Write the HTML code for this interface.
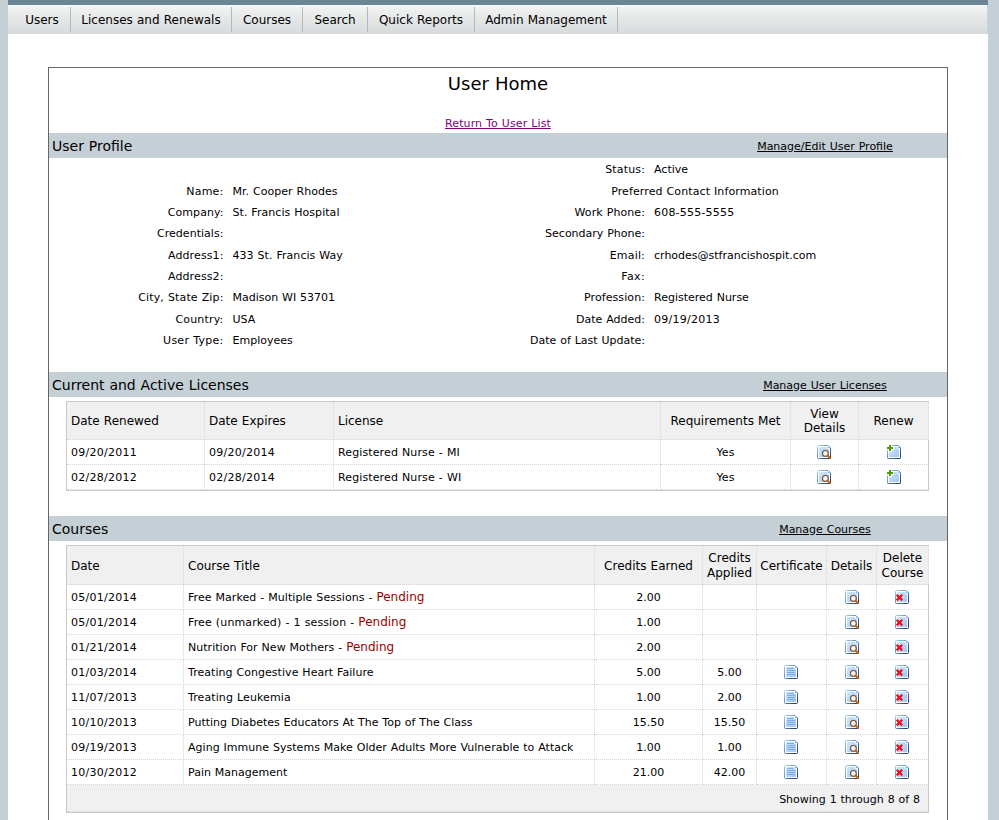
<!DOCTYPE html>
<html lang="en">
<head>
<meta charset="utf-8">
<title>User Home</title>
<style>
html,body{margin:0;padding:0;}
body{background:#c5cfd6;font-family:"DejaVu Sans","Liberation Sans",sans-serif;font-size:11px;color:#000;word-spacing:0.034em;width:999px;height:820px;overflow:hidden;position:relative;}
#page{position:absolute;left:8px;top:0;width:980px;height:820px;background:#fff;}
#topbar{height:5px;background:#6b8595;}
#nav{height:29px;margin:0;padding:0 0 0 6px;list-style:none;background:linear-gradient(#fcfcfc 0,#f2f3f3 1.5px,#e6e8e8 13px,#dcdfe0 23px,#d6d9da 29px);width:973px;overflow:hidden;border-right:1px solid #c9d2d8;}
#nav li{float:left;height:25px;margin-top:2px;line-height:27px;font-size:12px;text-align:center;border-right:1px solid #b4b8ba;box-sizing:border-box;white-space:nowrap;}
#box{position:absolute;left:40px;top:67px;width:898px;height:800px;border:1px solid #666;}
h1{position:absolute;left:0;top:5px;width:898px;margin:0;text-align:center;font-size:18px;font-weight:normal;line-height:22px;}
#ret{position:absolute;left:0;top:49px;width:898px;text-align:center;line-height:14px;}
#ret a{color:#800080;letter-spacing:.1px;}
a{color:#000;text-decoration:underline;}
.bar{position:absolute;left:0;width:898px;height:25px;background:#c5cfd6;}
.bar h2{position:absolute;left:3px;top:1px;margin:0;font-size:14px;font-weight:normal;line-height:25px;}
.bar .lnk{position:absolute;left:654px;width:244px;top:1px;text-align:center;line-height:25px;}

table.prof{position:absolute;top:91.33px;border-collapse:separate;border-spacing:0;table-layout:fixed;}
table.prof th,table.prof td{height:21.3333px;line-height:21.3333px;padding:0;font-size:11px;font-weight:normal;white-space:nowrap;vertical-align:top;}
table.prof th{text-align:right;}
table.prof td{text-align:left;}
#profL{left:0;width:440px;}
#profL th{width:174.5px;}
#profL td{padding-left:9px;}
#profR{left:394px;width:504px;}
#profR th{width:202px;}
#profR td{padding-left:9px;}
#profR td.pc{text-align:center;padding-left:0;}

table.grid{position:absolute;left:17px;width:863px;border-collapse:separate;border-spacing:0;table-layout:fixed;border:1px solid #c9c9c9;border-right:0;}
table.grid th,table.grid td{box-sizing:border-box;border-right:1px dotted #d6d6d6;border-bottom:1px dotted #d6d6d6;padding:0 4px;font-weight:normal;overflow:hidden;white-space:nowrap;}
table.grid th{background:#f0f0f0;font-size:12px;line-height:14.58px;text-align:center;vertical-align:middle;padding:0 2px;}
table.grid th.l{text-align:left;padding-left:4px;}
table.grid td{height:25px;font-size:11px;line-height:14px;text-align:left;vertical-align:middle;padding-top:2px;}
table.grid td.c{text-align:center;}
table.grid .last{border-right:1px solid #c9c9c9;}
table.grid td.foot{background:#f0f0f0;text-align:right;padding-right:8px;height:27px;padding-top:4px;}
#lic{top:333px;}
#lic th{height:38px;line-height:14px;}
#crs{top:477px;}
#crs th{height:39px;line-height:15px;padding-top:2px;}
.pend{color:#990000;font-size:12px;line-height:10px;letter-spacing:0;}
svg.ic{display:block;margin:0 auto;}
table.grid a{display:block;}
table.grid td.c a{margin-top:-2px;}
svg.ic{position:relative;}
#lic svg.iv,#crs svg.id,svg.ic2{left:-.5px;}
#lic svg.ir,#crs svg.iv{left:.5px;}
table.grid td.d{letter-spacing:.25px;}
table.grid th.last{border-right:1px dotted #d6d6d6;}
</style>
</head>
<body>
<svg width="0" height="0" style="position:absolute" aria-hidden="true"><defs><linearGradient id="go" x1="0" y1="0" x2="1" y2="1"><stop offset="0" stop-color="#a6d0f0"/><stop offset=".45" stop-color="#5f8fc4"/><stop offset="1" stop-color="#1d2f55"/></linearGradient><linearGradient id="gf" x1="0" y1="0" x2="1" y2="1"><stop offset="0" stop-color="#d3e6fb"/><stop offset="1" stop-color="#9cc7f6"/></linearGradient></defs></svg>
<div id="page">
<div id="topbar"></div>
<ul id="nav">
<li style="width:57px">Users</li>
<li style="width:161px">Licenses and Renewals</li>
<li style="width:71px">Courses</li>
<li style="width:65px">Search</li>
<li style="width:107px">Quick Reports</li>
<li style="width:143px">Admin Management</li>
</ul>
<div id="box">
<h1>User Home</h1>
<div id="ret"><a href="#">Return To User List</a></div>

<div class="bar" style="top:65px"><h2>User Profile</h2><div class="lnk"><a href="#">Manage/Edit User Profile</a></div></div>
<!--PROFILE-->
<table class="prof" id="profL">
<tr><th>&nbsp;</th><td>&nbsp;</td></tr>
<tr><th style="letter-spacing:.2px">Name:</th><td style="letter-spacing:.03px">Mr. Cooper Rhodes</td></tr>
<tr><th style="letter-spacing:.06px">Company:</th><td style="letter-spacing:.05px">St. Francis Hospital</td></tr>
<tr><th style="letter-spacing:.04px">Credentials:</th><td>&nbsp;</td></tr>
<tr><th style="letter-spacing:.11px">Address1:</th><td style="letter-spacing:.05px">433 St. Francis Way</td></tr>
<tr><th style="letter-spacing:.11px">Address2:</th><td>&nbsp;</td></tr>
<tr><th style="letter-spacing:.125px">City, State Zip:</th><td>Madison WI 53701</td></tr>
<tr><th style="letter-spacing:.19px">Country:</th><td>USA</td></tr>
<tr><th style="letter-spacing:.25px">User Type:</th><td>Employees</td></tr>
</table>
<table class="prof" id="profR">
<tr><th style="letter-spacing:.14px">Status:</th><td>Active</td></tr>
<tr><td colspan="2" class="pc" style="letter-spacing:.1px">Preferred Contact Information</td></tr>
<tr><th style="letter-spacing:.09px">Work Phone:</th><td style="letter-spacing:.2px">608-555-5555</td></tr>
<tr><th>Secondary Phone:</th><td>&nbsp;</td></tr>
<tr><th style="letter-spacing:.17px">Email:</th><td>crhodes@stfrancishospit.com</td></tr>
<tr><th style="letter-spacing:.37px">Fax:</th><td>&nbsp;</td></tr>
<tr><th style="letter-spacing:.09px">Profession:</th><td>Registered Nurse</td></tr>
<tr><th>Date Added:</th><td style="letter-spacing:.25px">09/19/2013</td></tr>
<tr><th>Date of Last Update:</th><td>&nbsp;</td></tr>
</table>
<!--/PROFILE-->

<div class="bar" style="top:304px"><h2>Current and Active Licenses</h2><div class="lnk"><a href="#">Manage User Licenses</a></div></div>
<!--LICENSES-->
<table class="grid" id="lic"><thead><tr><th class="l" style="width:138px">Date Renewed</th><th class="l" style="width:129px">Date Expires</th><th class="l" style="width:327px">License</th><th style="width:130px">Requirements Met</th><th style="width:68px">View<br>Details</th><th class="last" style="width:70px">Renew</th></tr></thead><tbody>
<tr><td class="d">09/20/2011</td><td class="d">09/20/2014</td><td style="letter-spacing:.12px">Registered Nurse - MI</td><td class="c">Yes</td><td class="c"><a href="#"><svg class="ic iv" width="14" height="14" viewBox="0 0 14 14"><path d="M1.5 .5H11L13.5 3V12.5Q13.5 13.5 12.5 13.5H1.5Q.5 13.5 .5 12.5V1.5Q.5 .5 1.5 .5Z" fill="#fff" stroke="url(#go)"/><path d="M2 2H10.2V3.8H12V12H2Z" fill="url(#gf)"/><path d="M11 1.2V3H12.8Z" fill="#7db1ea"/><circle cx="8.4" cy="8.4" r="2.9" fill="#f4f9ff" stroke="#7a4a22" stroke-width="1.1"/><path d="M10.6 10.6L13.3 13.3" stroke="#c2650f" stroke-width="2" stroke-linecap="round"/></svg></a></td><td class="c last"><a href="#"><svg class="ic ir" width="14" height="14" viewBox="0 0 14 14"><path d="M5 .5H11L13.5 3V12.5Q13.5 13.5 12.5 13.5H1.5Q.5 13.5 .5 12.5V5.5" fill="#fff" stroke="url(#go)"/><path d="M.5 5.5V12.5Q.5 13.5 1.5 13.5H12.5Q13.5 13.5 13.5 12.5V3L11 .5H5V5.5Z" fill="#fff"/><path d="M5 .5H11L13.5 3V12.5Q13.5 13.5 12.5 13.5H1.5Q.5 13.5 .5 12.5V5.5" fill="none" stroke="url(#go)"/><path d="M7 2H10.2V3.8H12V12H2V7H5V5H7Z" fill="url(#gf)"/><path d="M11 1.2V3H12.8Z" fill="#7db1ea"/><path d="M3 0V6M0 3H6" stroke="#4e9a06" stroke-width="2"/></svg></a></td></tr>
<tr><td class="d">02/28/2012</td><td class="d">02/28/2014</td><td style="letter-spacing:.12px">Registered Nurse - WI</td><td class="c">Yes</td><td class="c"><a href="#"><svg class="ic iv" width="14" height="14" viewBox="0 0 14 14"><path d="M1.5 .5H11L13.5 3V12.5Q13.5 13.5 12.5 13.5H1.5Q.5 13.5 .5 12.5V1.5Q.5 .5 1.5 .5Z" fill="#fff" stroke="url(#go)"/><path d="M2 2H10.2V3.8H12V12H2Z" fill="url(#gf)"/><path d="M11 1.2V3H12.8Z" fill="#7db1ea"/><circle cx="8.4" cy="8.4" r="2.9" fill="#f4f9ff" stroke="#7a4a22" stroke-width="1.1"/><path d="M10.6 10.6L13.3 13.3" stroke="#c2650f" stroke-width="2" stroke-linecap="round"/></svg></a></td><td class="c last"><a href="#"><svg class="ic ir" width="14" height="14" viewBox="0 0 14 14"><path d="M5 .5H11L13.5 3V12.5Q13.5 13.5 12.5 13.5H1.5Q.5 13.5 .5 12.5V5.5" fill="#fff" stroke="url(#go)"/><path d="M.5 5.5V12.5Q.5 13.5 1.5 13.5H12.5Q13.5 13.5 13.5 12.5V3L11 .5H5V5.5Z" fill="#fff"/><path d="M5 .5H11L13.5 3V12.5Q13.5 13.5 12.5 13.5H1.5Q.5 13.5 .5 12.5V5.5" fill="none" stroke="url(#go)"/><path d="M7 2H10.2V3.8H12V12H2V7H5V5H7Z" fill="url(#gf)"/><path d="M11 1.2V3H12.8Z" fill="#7db1ea"/><path d="M3 0V6M0 3H6" stroke="#4e9a06" stroke-width="2"/></svg></a></td></tr>
</tbody></table>
<!--/LICENSES-->

<div class="bar" style="top:448px"><h2>Courses</h2><div class="lnk"><a href="#">Manage Courses</a></div></div>
<!--COURSES-->
<table class="grid" id="crs"><thead><tr><th class="l" style="width:117px">Date</th><th class="l" style="width:411px">Course Title</th><th style="width:108px">Credits Earned</th><th style="width:54px">Credits<br>Applied</th><th style="width:70px">Certificate</th><th style="width:50px">Details</th><th class="last" style="width:52px">Delete<br>Course</th></tr></thead><tbody>
<tr><td class="d">05/01/2014</td><td style="letter-spacing:.06px">Free Marked - Multiple Sessions - <span class="pend">Pending</span></td><td class="c">2.00</td><td class="c">&nbsp;</td><td class="c">&nbsp;</td><td class="c"><a href="#"><svg class="ic iv" width="14" height="14" viewBox="0 0 14 14"><path d="M1.5 .5H11L13.5 3V12.5Q13.5 13.5 12.5 13.5H1.5Q.5 13.5 .5 12.5V1.5Q.5 .5 1.5 .5Z" fill="#fff" stroke="url(#go)"/><path d="M2 2H10.2V3.8H12V12H2Z" fill="url(#gf)"/><path d="M11 1.2V3H12.8Z" fill="#7db1ea"/><circle cx="8.4" cy="8.4" r="2.9" fill="#f4f9ff" stroke="#7a4a22" stroke-width="1.1"/><path d="M10.6 10.6L13.3 13.3" stroke="#c2650f" stroke-width="2" stroke-linecap="round"/></svg></a></td><td class="c last"><a href="#"><svg class="ic id" width="14" height="14" viewBox="0 0 14 14"><path d="M1.5 .5H11L13.5 3V12.5Q13.5 13.5 12.5 13.5H1.5Q.5 13.5 .5 12.5V1.5Q.5 .5 1.5 .5Z" fill="#fff" stroke="url(#go)"/><path d="M2 2H10.2V3.8H12V12H2Z" fill="url(#gf)"/><path d="M11 1.2V3H12.8Z" fill="#7db1ea"/><path d="M1.6 4.8L7.2 10.4M7.2 4.8L1.6 10.4" stroke="#e8101c" stroke-width="2.2"/></svg></a></td></tr>
<tr><td class="d">05/01/2014</td><td style="letter-spacing:.13px">Free (unmarked) - 1 session - <span class="pend">Pending</span></td><td class="c">1.00</td><td class="c">&nbsp;</td><td class="c">&nbsp;</td><td class="c"><a href="#"><svg class="ic iv" width="14" height="14" viewBox="0 0 14 14"><path d="M1.5 .5H11L13.5 3V12.5Q13.5 13.5 12.5 13.5H1.5Q.5 13.5 .5 12.5V1.5Q.5 .5 1.5 .5Z" fill="#fff" stroke="url(#go)"/><path d="M2 2H10.2V3.8H12V12H2Z" fill="url(#gf)"/><path d="M11 1.2V3H12.8Z" fill="#7db1ea"/><circle cx="8.4" cy="8.4" r="2.9" fill="#f4f9ff" stroke="#7a4a22" stroke-width="1.1"/><path d="M10.6 10.6L13.3 13.3" stroke="#c2650f" stroke-width="2" stroke-linecap="round"/></svg></a></td><td class="c last"><a href="#"><svg class="ic id" width="14" height="14" viewBox="0 0 14 14"><path d="M1.5 .5H11L13.5 3V12.5Q13.5 13.5 12.5 13.5H1.5Q.5 13.5 .5 12.5V1.5Q.5 .5 1.5 .5Z" fill="#fff" stroke="url(#go)"/><path d="M2 2H10.2V3.8H12V12H2Z" fill="url(#gf)"/><path d="M11 1.2V3H12.8Z" fill="#7db1ea"/><path d="M1.6 4.8L7.2 10.4M7.2 4.8L1.6 10.4" stroke="#e8101c" stroke-width="2.2"/></svg></a></td></tr>
<tr><td class="d">01/21/2014</td><td style="letter-spacing:.035px">Nutrition For New Mothers - <span class="pend">Pending</span></td><td class="c">2.00</td><td class="c">&nbsp;</td><td class="c">&nbsp;</td><td class="c"><a href="#"><svg class="ic iv" width="14" height="14" viewBox="0 0 14 14"><path d="M1.5 .5H11L13.5 3V12.5Q13.5 13.5 12.5 13.5H1.5Q.5 13.5 .5 12.5V1.5Q.5 .5 1.5 .5Z" fill="#fff" stroke="url(#go)"/><path d="M2 2H10.2V3.8H12V12H2Z" fill="url(#gf)"/><path d="M11 1.2V3H12.8Z" fill="#7db1ea"/><circle cx="8.4" cy="8.4" r="2.9" fill="#f4f9ff" stroke="#7a4a22" stroke-width="1.1"/><path d="M10.6 10.6L13.3 13.3" stroke="#c2650f" stroke-width="2" stroke-linecap="round"/></svg></a></td><td class="c last"><a href="#"><svg class="ic id" width="14" height="14" viewBox="0 0 14 14"><path d="M1.5 .5H11L13.5 3V12.5Q13.5 13.5 12.5 13.5H1.5Q.5 13.5 .5 12.5V1.5Q.5 .5 1.5 .5Z" fill="#fff" stroke="url(#go)"/><path d="M2 2H10.2V3.8H12V12H2Z" fill="url(#gf)"/><path d="M11 1.2V3H12.8Z" fill="#7db1ea"/><path d="M1.6 4.8L7.2 10.4M7.2 4.8L1.6 10.4" stroke="#e8101c" stroke-width="2.2"/></svg></a></td></tr>
<tr><td class="d">01/03/2014</td><td style="letter-spacing:.045px">Treating Congestive Heart Failure</td><td class="c">5.00</td><td class="c">5.00</td><td class="c"><a href="#"><svg class="ic ic2" width="14" height="14" viewBox="0 0 14 14"><path d="M1.5 .5H11L13.5 3V12.5Q13.5 13.5 12.5 13.5H1.5Q.5 13.5 .5 12.5V1.5Q.5 .5 1.5 .5Z" fill="#fff" stroke="url(#go)"/><path d="M2 2H10.2V3.8H12V12H2Z" fill="url(#gf)"/><path d="M11 1.2V3H12.8Z" fill="#7db1ea"/><path d="M3 3.5H9.5M3 5.5H10.8M3 7.5H10.8M3 9.5H10.8" stroke="#6d9fdc" stroke-width=".8"/></svg></a></td><td class="c"><a href="#"><svg class="ic iv" width="14" height="14" viewBox="0 0 14 14"><path d="M1.5 .5H11L13.5 3V12.5Q13.5 13.5 12.5 13.5H1.5Q.5 13.5 .5 12.5V1.5Q.5 .5 1.5 .5Z" fill="#fff" stroke="url(#go)"/><path d="M2 2H10.2V3.8H12V12H2Z" fill="url(#gf)"/><path d="M11 1.2V3H12.8Z" fill="#7db1ea"/><circle cx="8.4" cy="8.4" r="2.9" fill="#f4f9ff" stroke="#7a4a22" stroke-width="1.1"/><path d="M10.6 10.6L13.3 13.3" stroke="#c2650f" stroke-width="2" stroke-linecap="round"/></svg></a></td><td class="c last"><a href="#"><svg class="ic id" width="14" height="14" viewBox="0 0 14 14"><path d="M1.5 .5H11L13.5 3V12.5Q13.5 13.5 12.5 13.5H1.5Q.5 13.5 .5 12.5V1.5Q.5 .5 1.5 .5Z" fill="#fff" stroke="url(#go)"/><path d="M2 2H10.2V3.8H12V12H2Z" fill="url(#gf)"/><path d="M11 1.2V3H12.8Z" fill="#7db1ea"/><path d="M1.6 4.8L7.2 10.4M7.2 4.8L1.6 10.4" stroke="#e8101c" stroke-width="2.2"/></svg></a></td></tr>
<tr><td class="d">11/07/2013</td><td style="letter-spacing:.1px">Treating Leukemia</td><td class="c">1.00</td><td class="c">2.00</td><td class="c"><a href="#"><svg class="ic ic2" width="14" height="14" viewBox="0 0 14 14"><path d="M1.5 .5H11L13.5 3V12.5Q13.5 13.5 12.5 13.5H1.5Q.5 13.5 .5 12.5V1.5Q.5 .5 1.5 .5Z" fill="#fff" stroke="url(#go)"/><path d="M2 2H10.2V3.8H12V12H2Z" fill="url(#gf)"/><path d="M11 1.2V3H12.8Z" fill="#7db1ea"/><path d="M3 3.5H9.5M3 5.5H10.8M3 7.5H10.8M3 9.5H10.8" stroke="#6d9fdc" stroke-width=".8"/></svg></a></td><td class="c"><a href="#"><svg class="ic iv" width="14" height="14" viewBox="0 0 14 14"><path d="M1.5 .5H11L13.5 3V12.5Q13.5 13.5 12.5 13.5H1.5Q.5 13.5 .5 12.5V1.5Q.5 .5 1.5 .5Z" fill="#fff" stroke="url(#go)"/><path d="M2 2H10.2V3.8H12V12H2Z" fill="url(#gf)"/><path d="M11 1.2V3H12.8Z" fill="#7db1ea"/><circle cx="8.4" cy="8.4" r="2.9" fill="#f4f9ff" stroke="#7a4a22" stroke-width="1.1"/><path d="M10.6 10.6L13.3 13.3" stroke="#c2650f" stroke-width="2" stroke-linecap="round"/></svg></a></td><td class="c last"><a href="#"><svg class="ic id" width="14" height="14" viewBox="0 0 14 14"><path d="M1.5 .5H11L13.5 3V12.5Q13.5 13.5 12.5 13.5H1.5Q.5 13.5 .5 12.5V1.5Q.5 .5 1.5 .5Z" fill="#fff" stroke="url(#go)"/><path d="M2 2H10.2V3.8H12V12H2Z" fill="url(#gf)"/><path d="M11 1.2V3H12.8Z" fill="#7db1ea"/><path d="M1.6 4.8L7.2 10.4M7.2 4.8L1.6 10.4" stroke="#e8101c" stroke-width="2.2"/></svg></a></td></tr>
<tr><td class="d">10/10/2013</td><td>Putting Diabetes Educators At The Top of The Class</td><td class="c">15.50</td><td class="c">15.50</td><td class="c"><a href="#"><svg class="ic ic2" width="14" height="14" viewBox="0 0 14 14"><path d="M1.5 .5H11L13.5 3V12.5Q13.5 13.5 12.5 13.5H1.5Q.5 13.5 .5 12.5V1.5Q.5 .5 1.5 .5Z" fill="#fff" stroke="url(#go)"/><path d="M2 2H10.2V3.8H12V12H2Z" fill="url(#gf)"/><path d="M11 1.2V3H12.8Z" fill="#7db1ea"/><path d="M3 3.5H9.5M3 5.5H10.8M3 7.5H10.8M3 9.5H10.8" stroke="#6d9fdc" stroke-width=".8"/></svg></a></td><td class="c"><a href="#"><svg class="ic iv" width="14" height="14" viewBox="0 0 14 14"><path d="M1.5 .5H11L13.5 3V12.5Q13.5 13.5 12.5 13.5H1.5Q.5 13.5 .5 12.5V1.5Q.5 .5 1.5 .5Z" fill="#fff" stroke="url(#go)"/><path d="M2 2H10.2V3.8H12V12H2Z" fill="url(#gf)"/><path d="M11 1.2V3H12.8Z" fill="#7db1ea"/><circle cx="8.4" cy="8.4" r="2.9" fill="#f4f9ff" stroke="#7a4a22" stroke-width="1.1"/><path d="M10.6 10.6L13.3 13.3" stroke="#c2650f" stroke-width="2" stroke-linecap="round"/></svg></a></td><td class="c last"><a href="#"><svg class="ic id" width="14" height="14" viewBox="0 0 14 14"><path d="M1.5 .5H11L13.5 3V12.5Q13.5 13.5 12.5 13.5H1.5Q.5 13.5 .5 12.5V1.5Q.5 .5 1.5 .5Z" fill="#fff" stroke="url(#go)"/><path d="M2 2H10.2V3.8H12V12H2Z" fill="url(#gf)"/><path d="M11 1.2V3H12.8Z" fill="#7db1ea"/><path d="M1.6 4.8L7.2 10.4M7.2 4.8L1.6 10.4" stroke="#e8101c" stroke-width="2.2"/></svg></a></td></tr>
<tr><td class="d">09/19/2013</td><td style="letter-spacing:.025px">Aging Immune Systems Make Older Adults More Vulnerable to Attack</td><td class="c">1.00</td><td class="c">1.00</td><td class="c"><a href="#"><svg class="ic ic2" width="14" height="14" viewBox="0 0 14 14"><path d="M1.5 .5H11L13.5 3V12.5Q13.5 13.5 12.5 13.5H1.5Q.5 13.5 .5 12.5V1.5Q.5 .5 1.5 .5Z" fill="#fff" stroke="url(#go)"/><path d="M2 2H10.2V3.8H12V12H2Z" fill="url(#gf)"/><path d="M11 1.2V3H12.8Z" fill="#7db1ea"/><path d="M3 3.5H9.5M3 5.5H10.8M3 7.5H10.8M3 9.5H10.8" stroke="#6d9fdc" stroke-width=".8"/></svg></a></td><td class="c"><a href="#"><svg class="ic iv" width="14" height="14" viewBox="0 0 14 14"><path d="M1.5 .5H11L13.5 3V12.5Q13.5 13.5 12.5 13.5H1.5Q.5 13.5 .5 12.5V1.5Q.5 .5 1.5 .5Z" fill="#fff" stroke="url(#go)"/><path d="M2 2H10.2V3.8H12V12H2Z" fill="url(#gf)"/><path d="M11 1.2V3H12.8Z" fill="#7db1ea"/><circle cx="8.4" cy="8.4" r="2.9" fill="#f4f9ff" stroke="#7a4a22" stroke-width="1.1"/><path d="M10.6 10.6L13.3 13.3" stroke="#c2650f" stroke-width="2" stroke-linecap="round"/></svg></a></td><td class="c last"><a href="#"><svg class="ic id" width="14" height="14" viewBox="0 0 14 14"><path d="M1.5 .5H11L13.5 3V12.5Q13.5 13.5 12.5 13.5H1.5Q.5 13.5 .5 12.5V1.5Q.5 .5 1.5 .5Z" fill="#fff" stroke="url(#go)"/><path d="M2 2H10.2V3.8H12V12H2Z" fill="url(#gf)"/><path d="M11 1.2V3H12.8Z" fill="#7db1ea"/><path d="M1.6 4.8L7.2 10.4M7.2 4.8L1.6 10.4" stroke="#e8101c" stroke-width="2.2"/></svg></a></td></tr>
<tr><td class="d">10/30/2012</td><td>Pain Management</td><td class="c">21.00</td><td class="c">42.00</td><td class="c"><a href="#"><svg class="ic ic2" width="14" height="14" viewBox="0 0 14 14"><path d="M1.5 .5H11L13.5 3V12.5Q13.5 13.5 12.5 13.5H1.5Q.5 13.5 .5 12.5V1.5Q.5 .5 1.5 .5Z" fill="#fff" stroke="url(#go)"/><path d="M2 2H10.2V3.8H12V12H2Z" fill="url(#gf)"/><path d="M11 1.2V3H12.8Z" fill="#7db1ea"/><path d="M3 3.5H9.5M3 5.5H10.8M3 7.5H10.8M3 9.5H10.8" stroke="#6d9fdc" stroke-width=".8"/></svg></a></td><td class="c"><a href="#"><svg class="ic iv" width="14" height="14" viewBox="0 0 14 14"><path d="M1.5 .5H11L13.5 3V12.5Q13.5 13.5 12.5 13.5H1.5Q.5 13.5 .5 12.5V1.5Q.5 .5 1.5 .5Z" fill="#fff" stroke="url(#go)"/><path d="M2 2H10.2V3.8H12V12H2Z" fill="url(#gf)"/><path d="M11 1.2V3H12.8Z" fill="#7db1ea"/><circle cx="8.4" cy="8.4" r="2.9" fill="#f4f9ff" stroke="#7a4a22" stroke-width="1.1"/><path d="M10.6 10.6L13.3 13.3" stroke="#c2650f" stroke-width="2" stroke-linecap="round"/></svg></a></td><td class="c last"><a href="#"><svg class="ic id" width="14" height="14" viewBox="0 0 14 14"><path d="M1.5 .5H11L13.5 3V12.5Q13.5 13.5 12.5 13.5H1.5Q.5 13.5 .5 12.5V1.5Q.5 .5 1.5 .5Z" fill="#fff" stroke="url(#go)"/><path d="M2 2H10.2V3.8H12V12H2Z" fill="url(#gf)"/><path d="M11 1.2V3H12.8Z" fill="#7db1ea"/><path d="M1.6 4.8L7.2 10.4M7.2 4.8L1.6 10.4" stroke="#e8101c" stroke-width="2.2"/></svg></a></td></tr>
</tbody><tfoot><tr><td colspan="7" class="foot last">Showing 1 through 8 of 8</td></tr></tfoot></table>
<!--/COURSES-->

</div>
</div>
</body>
</html>
